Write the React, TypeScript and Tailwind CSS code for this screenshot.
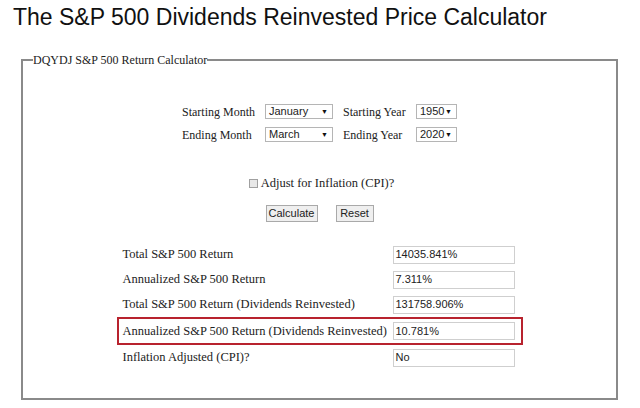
import React from "react";

const serif = { fontFamily: '"Liberation Serif", "Times New Roman", serif' };

const FakeSelect = ({ value, width }: { value: string; width: string }) => (
  <div
    className={`flex h-[15px] items-center justify-between border border-[#b5b5b5] bg-white pl-[3px] pr-[4px] font-['Liberation_Sans',Arial,sans-serif] text-[11px] leading-none text-[#222] ${width}`}
  >
    <span>{value}</span>
    <span className="text-[7px] text-[#111]">▼</span>
  </div>
);

const Button = ({ label, width }: { label: string; width: string }) => (
  <div
    className={`flex h-[17px] items-center justify-center border border-[#a9a9a9] bg-[#efefef] font-['Liberation_Sans',Arial,sans-serif] text-[11px] leading-none text-[#222] ${width}`}
  >
    {label}
  </div>
);

const results = [
  { label: "Total S&P 500 Return", value: "14035.841%" },
  { label: "Annualized S&P 500 Return", value: "7.311%" },
  { label: "Total S&P 500 Return (Dividends Reinvested)", value: "131758.906%" },
  { label: "Annualized S&P 500 Return (Dividends Reinvested)", value: "10.781%", highlight: true },
  { label: "Inflation Adjusted (CPI)?", value: "No" },
];

export default function App() {
  return (
    <div className="h-[408px] w-[640px] overflow-hidden bg-white">
      <h1 className="ml-[13px] pt-[3px] font-['Liberation_Sans',Arial,sans-serif] text-[23px] leading-[28px] text-[#111]">
        The S&amp;P 500 Dividends Reinvested Price Calculator
      </h1>

      <fieldset
        className="mt-[22px] ml-[21px] h-[347px] w-[597px] border-2 border-[#8a8a8a] px-0 pb-0 text-[12px] text-[#222]"
        style={serif}
      >
        <legend className="ml-[10px] px-0 leading-[14px]">DQYDJ S&amp;P 500 Return Calculator</legend>

        <div className="mt-[33px] flex flex-col items-center">
          <div className="flex h-[23px] items-center">
            <span className="w-[83px]">Starting Month</span>
            <FakeSelect value="January" width="w-[68px]" />
            <span className="ml-[10px] w-[73px]">Starting Year</span>
            <FakeSelect value="1950" width="w-[41px]" />
          </div>
          <div className="flex h-[23px] items-center">
            <span className="w-[83px]">Ending Month</span>
            <FakeSelect value="March" width="w-[68px]" />
            <span className="ml-[10px] w-[73px]">Ending Year</span>
            <FakeSelect value="2020" width="w-[41px]" />
          </div>

          <div className="mt-[26px] ml-[4px] flex h-[22px] items-center">
            <span className="mr-[3px] h-[9px] w-[9px] border border-[#a0a0a0] bg-[#e8e8e8]" />
            <span className="text-[12.5px]">Adjust for Inflation (CPI)?</span>
          </div>

          <div className="mt-[11px] flex gap-[18px]">
            <Button label="Calculate" width="w-[52px]" />
            <Button label="Reset" width="w-[38px]" />
          </div>

          <div className="mt-[20px] w-[406px]">
            {results.map((r) => (
              <div
                key={r.label}
                className={
                  r.highlight
                    ? "flex h-[28px] items-center justify-between border-2 border-[#b8232e] pr-[6px] pl-[4px]"
                    : "flex h-[25px] items-center justify-between pr-[8px] pl-[6px]"
                }
              >
                <span className="text-[12.5px]">{r.label}</span>
                <div className="flex h-[18px] w-[122px] items-center border border-[#cfcfcf] bg-white pl-[2px] font-['Liberation_Sans',Arial,sans-serif] text-[11px] text-[#222]">
                  {r.value}
                </div>
              </div>
            ))}
          </div>
        </div>
      </fieldset>
    </div>
  );
}
